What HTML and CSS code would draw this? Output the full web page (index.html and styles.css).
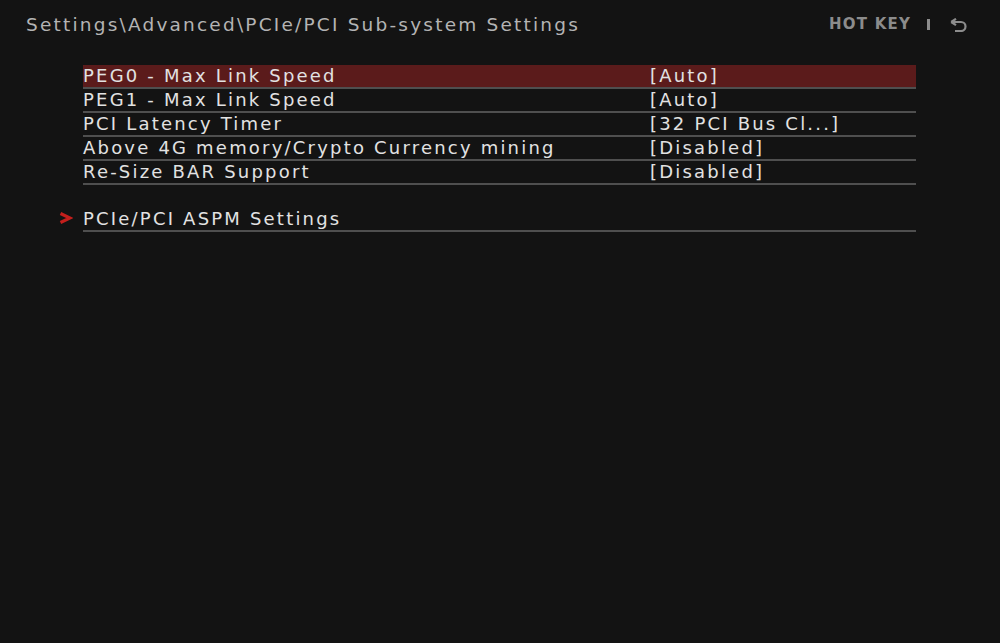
FILE: index.html
```html
<!DOCTYPE html>
<html>
<head>
<meta charset="utf-8">
<link rel="stylesheet" href="styles.css">
</head>
<body>
<div class="screen">
  <header class="top">
    <div class="crumb">Settings\Advanced\PCIe/PCI Sub-system Settings</div>
    <div class="hot">
      <span class="hk">HOT KEY</span>
      <span class="sep"></span>
      <svg class="back" width="18" height="14" viewBox="0 0 18 14"><path d="M2.5 4 H11 A4.5 4.5 0 0 1 11 13 H5" fill="none" stroke="#8c8c8c" stroke-width="2.2"/><path d="M1.2 4 L6 0.8 M1.2 4 L6 7.2" fill="none" stroke="#8c8c8c" stroke-width="2.2"/></svg>
    </div>
  </header>
  <div class="list">
    <div class="row sel"><span class="name">PEG0 - Max Link Speed</span><span class="val">[Auto]</span></div>
    <div class="row"><span class="name">PEG1 - Max Link Speed</span><span class="val">[Auto]</span></div>
    <div class="row"><span class="name">PCI Latency Timer</span><span class="val">[32 PCI Bus Cl...]</span></div>
    <div class="row"><span class="name">Above 4G memory/Crypto Currency mining</span><span class="val">[Disabled]</span></div>
    <div class="row"><span class="name">Re-Size BAR Support</span><span class="val">[Disabled]</span></div>
    <div class="row sub">
      <svg class="chev" width="14" height="12" viewBox="0 0 14 12"><path d="M1.5 1.5 L11 6 L1.5 10.5" fill="none" stroke="#c41f1c" stroke-width="3.2" stroke-linejoin="miter"/></svg>
      <span class="name">PCIe/PCI ASPM Settings</span>
    </div>
  </div>
</div>
</body>
</html>
```
FILE: styles.css
```css
html, body {
  margin: 0;
  padding: 0;
  background: #121212;
}
.screen {
  width: 1000px;
  height: 643px;
  background: #131313;
  font-family: "DejaVu Sans", "Noto Sans", sans-serif;
  color: #dcdcdc;
  overflow: hidden;
}
.top {
  display: flex;
  justify-content: space-between;
  align-items: center;
  padding: 10px 32px 0 26px;
  height: 28px;
}
.crumb {
  font-size: 18.5px;
  color: #b4b4b4;
  letter-spacing: 2.2px;
}
.hot {
  display: flex;
  align-items: center;
  color: #8c8c8c;
  font-size: 15px;
  font-weight: bold;
}
.hk { letter-spacing: 1.2px; }
.sep {
  width: 3px;
  height: 11px;
  background: #8c8c8c;
  margin: 0 20px 0 16px;
}
.back { display: block; margin-top: 1px; }
.list {
  padding: 27px 84px 0 83px;
}
.row {
  position: relative;
  display: flex;
  box-sizing: border-box;
  height: 24px;
  padding-bottom: 2px;
  align-items: center;
  border-bottom: 2px solid #4f4f4f;
  font-size: 18px;
  color: #e2e2e2;
  letter-spacing: 2.2px;
}
.row.sel {
  background: #5b1b1b;
}
.name { width: 567px; flex: none; }
.row.sub {
  margin-top: 23px;
}
.chev {
  position: absolute;
  left: -24px;
  top: 4px;
}
```
